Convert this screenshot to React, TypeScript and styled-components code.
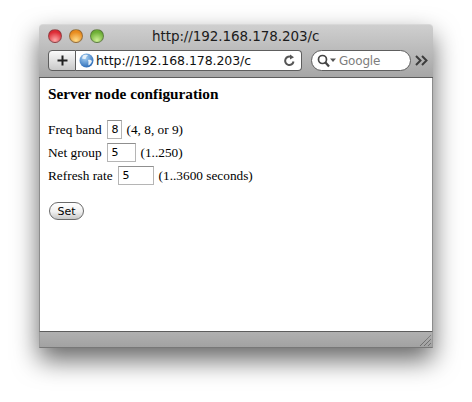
import React from 'react';
import styled, { createGlobalStyle } from 'styled-components';

const GlobalStyle = createGlobalStyle`
  html, body {
    margin: 0;
    padding: 0;
    background: #fff;
  }
`;

const Page = styled.div`
  width: 472px;
  height: 402px;
  box-sizing: border-box;
  padding: 24px 39px 0;
  overflow: hidden;
`;

const Window = styled.div`
  width: 394px;
  height: 324px;
  display: flex;
  flex-direction: column;
  border-radius: 4px 4px 0 0;
  box-shadow: 0 12px 26px rgba(0, 0, 0, 0.6);
`;

const Chrome = styled.div`
  height: 54px;
  box-sizing: border-box;
  flex: none;
  padding: 1px 4px 0 9px;
  border-radius: 4px 4px 0 0;
  border-top: 1px solid #d8d8d8;
  border-bottom: 1px solid #5c5c5c;
  background: linear-gradient(#cfcfcf, #a6a6a6);
`;

const TitleRow = styled.div`
  height: 20px;
  display: flex;
  align-items: center;
  position: relative;
`;

const Lights = styled.div`
  display: flex;
  gap: 7px;
`;

const Light = styled.span<{ $c: string; $d: string }>`
  width: 14px;
  height: 14px;
  border-radius: 50%;
  box-sizing: border-box;
  border: 1px solid rgba(70, 70, 70, 0.5);
  background: radial-gradient(circle at 50% 85%, ${(p) => p.$c} 0%, ${(p) => p.$d} 70%);
`;

const Title = styled.div`
  margin-left: 48px;
  font: 13.5px 'DejaVu Sans', sans-serif;
  letter-spacing: -0.08px;
  color: #1c1c1c;
`;

const ToolRow = styled.div`
  display: flex;
  align-items: center;
  height: 21px;
  margin-top: 4px;
`;

const AddButton = styled.div`
  width: 28px;
  height: 21px;
  box-sizing: border-box;
  border: 1px solid #5e5e5e;
  border-radius: 4px 0 0 4px;
  background: linear-gradient(#fafafa, #c9c9c9);
  display: flex;
  align-items: center;
  justify-content: center;
`;

const AddressBar = styled.div`
  width: 226px;
  height: 21px;
  box-sizing: border-box;
  border: 1px solid #5e5e5e;
  border-left: none;
  border-radius: 0 4px 4px 0;
  background: #fff;
  display: flex;
  align-items: center;
  padding: 0 5px 0 3px;
`;

const Url = styled.span`
  flex: 1;
  margin-left: 2px;
  font: 12.5px 'DejaVu Sans', sans-serif;
  letter-spacing: -0.07px;
  color: #111;
`;

const SearchBar = styled.div`
  width: 100px;
  height: 21px;
  margin-left: 9px;
  box-sizing: border-box;
  border: 1px solid #5e5e5e;
  border-radius: 11px;
  background: #fff;
  display: flex;
  align-items: center;
  padding-left: 5px;
`;

const SearchHint = styled.span`
  margin-left: 2px;
  font: 12px 'DejaVu Sans', sans-serif;
  letter-spacing: -0.2px;
  color: #7d7d7d;
`;

const More = styled.svg`
  margin-left: 4px;
`;

const Content = styled.div`
  flex: 1;
  box-sizing: border-box;
  padding: 7px 8px 0;
  background: #fff;
  border-left: 1px solid #8c8c8c;
  border-right: 1px solid #8c8c8c;
  font: 13.3px/18px 'Liberation Serif', 'Times New Roman', serif;
  color: #000;
`;

const Heading = styled.h3`
  margin: 0 0 17px;
  font: bold 15.3px/18px 'Liberation Serif', serif;
`;

const FieldRow = styled.div`
  display: flex;
  align-items: center;
  height: 19px;
  margin-bottom: 4px;
`;

const Input = styled.div<{ $w: number }>`
  width: ${(p) => p.$w}px;
  height: 19px;
  box-sizing: border-box;
  margin: 0 5px;
  padding-left: 4px;
  border: 1px solid #b5b5b5;
  border-top-color: #8f8f8f;
  font: 11px/17px 'DejaVu Sans', sans-serif;
  background: #fff;
`;

const SetButton = styled.button`
  display: block;
  width: 35px;
  height: 18px;
  margin: 17px 0 0 1px;
  padding: 0;
  box-sizing: border-box;
  border: 1px solid #6b6b6b;
  border-radius: 9px;
  background: linear-gradient(#ffffff, #f0f0f0 55%, #c8c8c8);
  font: 11px/15px 'DejaVu Sans', sans-serif;
  color: #000;
`;

const StatusBar = styled.div`
  height: 17px;
  flex: none;
  box-sizing: border-box;
  position: relative;
  border-top: 1px solid #5c5c5c;
  border-bottom: 1px solid #777;
  border-left: 1px solid #999;
  border-right: 1px solid #999;
  background: linear-gradient(#b0b0b0, #a2a2a2);
`;

const Grip = styled.svg`
  position: absolute;
  right: 0;
  bottom: 0;
`;

const fields = [
  { label: 'Freq band', value: '8', width: 15, hint: '(4, 8, or 9)' },
  { label: 'Net group', value: '5', width: 29, hint: '(1..250)' },
  { label: 'Refresh rate', value: '5', width: 36, hint: '(1..3600 seconds)' },
];

const App: React.FC = () => {
  return (
    <Page>
      <GlobalStyle />
      <Window>
        <Chrome>
          <TitleRow>
            <Lights>
              <Light $c="#ffa8a8" $d="#dc2a34" />
              <Light $c="#ffdc8a" $d="#e88a1c" />
              <Light $c="#cdf095" $d="#6cae34" />
            </Lights>
            <Title>http://192.168.178.203/c</Title>
          </TitleRow>
          <ToolRow>
            <AddButton>
              <svg width="11" height="11" viewBox="0 0 11 11">
                <path d="M5.5 0.5v10M0.5 5.5h10" stroke="#222" strokeWidth="2" />
              </svg>
            </AddButton>
            <AddressBar>
              <svg width="15" height="15" viewBox="0 0 15 15">
                <defs>
                  <radialGradient id="globe" cx="0.4" cy="0.3" r="0.8">
                    <stop offset="0" stopColor="#a9d3f5" />
                    <stop offset="1" stopColor="#1c5fb0" />
                  </radialGradient>
                </defs>
                <circle cx="7.5" cy="7.5" r="7" fill="url(#globe)" />
                <path d="M4 2.5c2-1 4-1 5 0-1 1-2 1-2 2.5S4 6 3 5.5zM9 7c2-.5 3 0 4 1-.5 2-2 4-3.500 4.500C9 11 10 9.500 9 7z" fill="#e6f0f8" />
              </svg>
              <Url>http://192.168.178.203/c</Url>
              <svg width="13" height="13" viewBox="0 0 13 13" fill="none">
                <path d="M10.500 7.500A4.200 4.200 0 1 1 8.500 3.200" stroke="#555" strokeWidth="2" />
                <path d="M7 0.500l4 2.800-4 2.200z" fill="#555" />
              </svg>
            </AddressBar>
            <SearchBar>
              <svg width="20" height="14" viewBox="0 0 20 14" fill="none">
                <circle cx="5.500" cy="5.500" r="4" stroke="#444" strokeWidth="1.700" />
                <path d="M8.500 8.500l3.500 4" stroke="#444" strokeWidth="2.200" />
                <path d="M13 4.500h6l-3 3.500z" fill="#555" />
              </svg>
              <SearchHint>Google</SearchHint>
            </SearchBar>
            <More width="14" height="11" viewBox="0 0 14 11" fill="none">
              <path d="M1 1l4.500 4.500L1 10M7 1l4.500 4.500L7 10" stroke="#3c3c3c" strokeWidth="2" />
            </More>
          </ToolRow>
        </Chrome>
        <Content>
          <Heading>Server node configuration</Heading>
          {fields.map((f) => (
            <FieldRow key={f.label}>
              {f.label}
              <Input $w={f.width}>{f.value}</Input>
              {f.hint}
            </FieldRow>
          ))}
          <SetButton>Set</SetButton>
        </Content>
        <StatusBar>
          <Grip width="14" height="14" viewBox="0 0 14 14" fill="none">
            <path d="M2 13L13 2M6 13l7-7M10 13l3-3" stroke="#5c5c5c" strokeWidth="1" strokeDasharray="1 0.500" />
          </Grip>
        </StatusBar>
      </Window>
    </Page>
  );
};

export default App;
